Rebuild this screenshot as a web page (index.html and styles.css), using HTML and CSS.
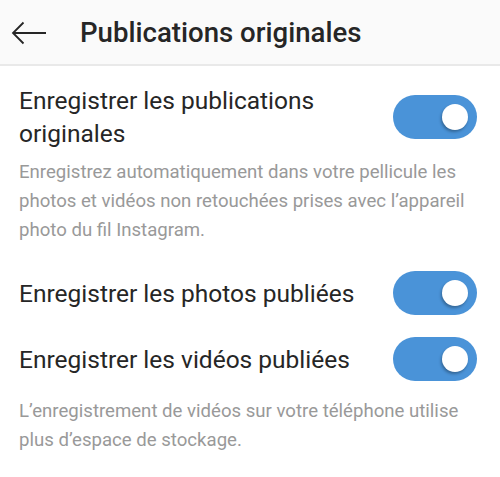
FILE: index.html
```html
<!DOCTYPE html>
<html lang="fr">
<head>
    <meta charset="UTF-8">
    <meta name="viewport" content="width=device-width, initial-scale=1.0">
    <title>Publications originales</title>
    <link rel="stylesheet" href="styles.css">
</head>
<body>
    <header class="topbar">
        <a href="#" class="back">
            <svg width="36" height="24" viewBox="0 0 36 24">
                <path d="M2 12 H35 M12.5 1.5 L2 12 L12.5 22.5" fill="none" stroke="#262626" stroke-width="1.8"/>
            </svg>
        </a>
        <h1>Publications originales</h1>
    </header>

    <div class="settings">
        <div class="setting first">
            <span class="label">Enregistrer les publications originales</span>
            <span class="switch"><span class="knob"></span></span>
        </div>
        <p class="hint">Enregistrez automatiquement dans votre pellicule les photos et vidéos non retouchées prises avec l’appareil photo du fil Instagram.</p>

        <div class="setting second">
            <span class="label">Enregistrer les photos publiées</span>
            <span class="switch"><span class="knob"></span></span>
        </div>
        <div class="setting third">
            <span class="label">Enregistrer les vidéos publiées</span>
            <span class="switch"><span class="knob"></span></span>
        </div>
        <p class="hint last">L’enregistrement de vidéos sur votre téléphone utilise plus d’espace de stockage.</p>
    </div>
</body>
</html>
```

FILE: styles.css
```css
* {
    margin: 0;
    padding: 0;
    box-sizing: border-box;
}

body {
    background: #fff;
    font-family: Roboto, "Noto Sans", sans-serif;
    color: #262626;
}

.topbar {
    height: 66px;
    background: #fafafa;
    border-bottom: 2px solid #e9e9e9;
    display: flex;
    align-items: center;
    padding-left: 11px;
}

.back {
    display: flex;
    width: 36px;
    height: 24px;
    margin-top: 1px;
}

.topbar h1 {
    font-size: 27.6px;
    font-weight: 500;
    margin-left: 33px;
    margin-top: 1px;
}

.settings {
    padding: 0 23px 0 19px;
}

.setting {
    display: flex;
    align-items: center;
    justify-content: space-between;
}

.setting.first {
    margin-top: 18px;
}

.setting.second {
    margin-top: 26px;
}

.setting.third {
    margin-top: 22px;
}

.label {
    font-size: 24.5px;
    line-height: 33px;
    max-width: 355px;
}

.switch {
    flex: none;
    width: 84px;
    height: 44px;
    border-radius: 22px;
    background: #4a93d8;
    display: flex;
    align-items: center;
    justify-content: flex-end;
    padding-right: 9px;
}

.knob {
    width: 26px;
    height: 26px;
    border-radius: 50%;
    background: #fff;
    box-shadow: -1px 2px 3px rgba(0, 0, 0, 0.3);
}

.hint {
    margin-top: 8px;
    font-size: 18.6px;
    line-height: 29px;
    color: #999;
}

.hint.last {
    margin-top: 16px;
}
```
